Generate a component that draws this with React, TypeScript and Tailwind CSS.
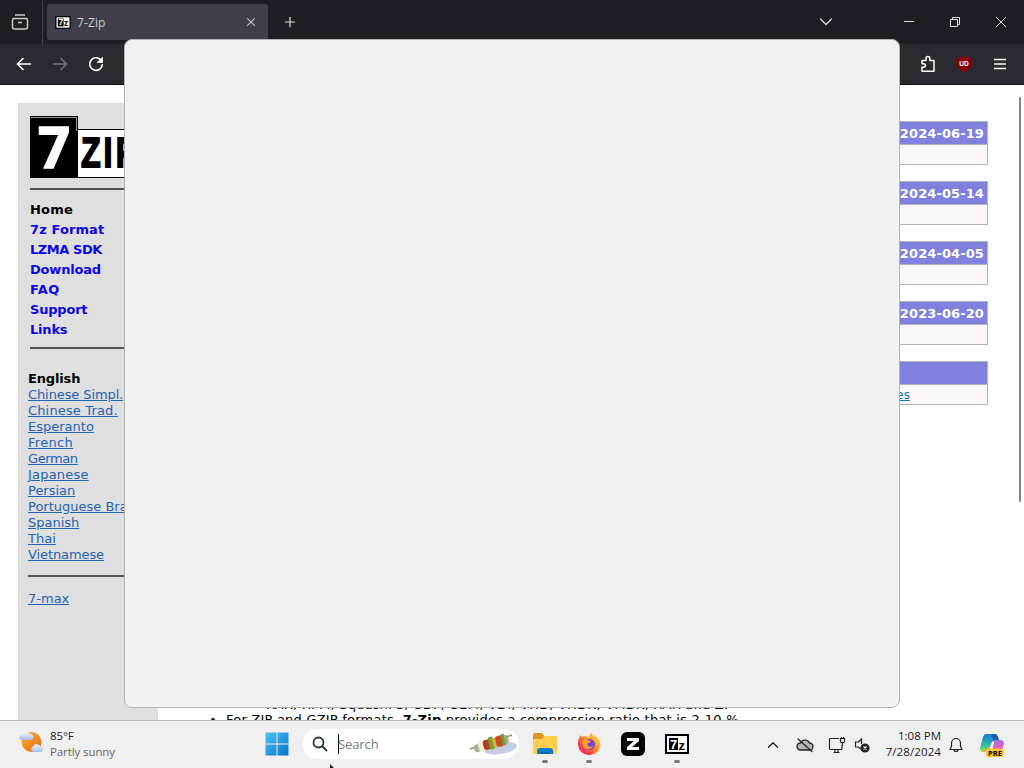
import React from 'react';
import { ChevronDown, ChevronUp, Plus, X } from 'lucide-react';

interface NewsItem {
    date: string;
    link?: string;
}

interface LinkItem {
    label: string;
    spacing: string;
}

const menuLinks: LinkItem[] = [
    { label: '7z Format', spacing: 'tracking-[0.1px]' },
    { label: 'LZMA SDK', spacing: 'tracking-[-0.45px]' },
    { label: 'Download', spacing: 'tracking-[-0.2px]' },
    { label: 'FAQ', spacing: 'tracking-[0.4px]' },
    { label: 'Support', spacing: 'tracking-[-0.2px]' },
    { label: 'Links', spacing: 'tracking-[-0.2px]' },
];

const languages: LinkItem[] = [
    { label: 'Chinese Simpl.', spacing: 'tracking-[-0.1px]' },
    { label: 'Chinese Trad.', spacing: 'tracking-[0.15px]' },
    { label: 'Esperanto', spacing: 'tracking-normal' },
    { label: 'French', spacing: 'tracking-[0.3px]' },
    { label: 'German', spacing: 'tracking-[-0.4px]' },
    { label: 'Japanese', spacing: 'tracking-[0.2px]' },
    { label: 'Persian', spacing: 'tracking-normal' },
    { label: 'Portuguese Brazil', spacing: 'tracking-normal' },
    { label: 'Spanish', spacing: 'tracking-normal' },
    { label: 'Thai', spacing: 'tracking-normal' },
    { label: 'Vietnamese', spacing: 'tracking-[-0.1px]' },
];

const news: NewsItem[] = [
    { date: '2024-06-19' },
    { date: '2024-05-14' },
    { date: '2024-04-05' },
    { date: '2023-06-20' },
    { date: '', link: 'es' },
];

// ---------------Browser---------------//
const SevenZipIcon: React.FC<{ className: string }> = ({ className }) => (
    <svg viewBox="0 0 24 20" className={className} fontFamily="Liberation Sans, sans-serif" fontWeight="700">
        <rect x="1" y="1" width="22" height="18" fill="#fff" stroke="#000" strokeWidth="2" />
        <rect x="4" y="4" width="9" height="12" fill="#000" />
        <text x="5" y="14.5" fontSize="13" fill="#fff">7</text>
        <text x="13.5" y="15.5" fontSize="13" fill="#000">z</text>
    </svg>
);

const TabStrip: React.FC = () => (
    <div className="flex h-11 bg-[#1e1d23] text-[#dddde2]">
        <div className="flex w-[43px] items-center justify-center border-r border-[#45444d]">
            <svg viewBox="0 0 18 18" className="mr-0.5 size-[18px]" fill="none" stroke="#c9c9ce" strokeWidth="1.5">
                <path d="M4 2h10M3 5.500h12a1.500 1.500 0 0 1 1.500 1.500v7a2 2 0 0 1-2 2h-11a2 2 0 0 1-2-2V7A1.500 1.500 0 0 1 3 5.500zM7 9.500h4" />
            </svg>
        </div>
        <div className="mt-1 ml-1 flex h-9 w-[221px] items-center rounded-[3px] bg-[#403e49] pr-2.5 pl-2">
            <SevenZipIcon className="h-[13px] w-4" />
            <span className="ml-1.5 flex-1 pt-0.5 text-[12px] tracking-[0.1px] text-[#cfced4]">7-Zip</span>
            <X className="size-3.5" strokeWidth={1.8} />
        </div>
        <div className="flex w-11 items-center justify-center">
            <Plus className="size-4" strokeWidth={1.8} />
        </div>
        <div className="flex flex-1 items-center justify-end">
            <svg viewBox="0 0 14 10" className="mr-[70px] h-2.5 w-3.5" fill="none" stroke="#dddde2" strokeWidth="1.300" strokeLinecap="round">
                <path d="m1.500 2 5.500 5.500L12.500 2" />
            </svg>
            <svg viewBox="0 0 12 12" className="mr-[34px] size-3" stroke="currentColor"><path d="M1 5.500h10" /></svg>
            <svg viewBox="0 0 12 12" className="mr-[34px] size-3" fill="none" stroke="currentColor">
                <path d="M1.500 3.500h7v7h-7zM3.500 3.500v-2h7v7h-2" />
            </svg>
            <svg viewBox="0 0 12 12" className="mr-[17px] size-3" stroke="currentColor"><path d="m1 1 10 10M11 1 1 11" /></svg>
        </div>
    </div>
);

const Toolbar: React.FC = () => (
    <div className="flex h-[41px] items-center justify-between border-b border-[#111] bg-[#2b2a31] px-4">
        <div className="flex gap-5">
            <svg viewBox="0 0 16 16" className="size-4" fill="none" stroke="#fff" strokeWidth="1.600" strokeLinecap="round">
                <path d="M1.500 8h13M7 2.500 1.500 8 7 13.500" />
            </svg>
            <svg viewBox="0 0 16 16" className="size-4" fill="none" stroke="#77767e" strokeWidth="1.500" strokeLinecap="round">
                <path d="M1.500 8h13M9 2.500 14.500 8 9 13.500" />
            </svg>
            <svg viewBox="0 0 16 16" className="size-4" fill="none" stroke="#fff" strokeWidth="1.600" strokeLinecap="round">
                <path d="M14.300 8.500A6.300 6.300 0 1 1 12.500 3.600" />
                <path d="M14.500 1.500v5h-5z" fill="#fff" strokeWidth="0.800" />
            </svg>
        </div>
        <div className="flex items-center gap-5 pr-px">
            <svg viewBox="0 0 16 18" className="h-[18px] w-4" fill="none" stroke="#fff" strokeWidth="1.500" strokeLinejoin="round">
                <path d="M2 5.500h4V3.500a1.900 1.900 0 0 1 3.800 0v2h4.200v10.700H2v-4h1.700a1.700 1.700 0 0 0 0-3.400H2z" />
            </svg>
            <svg viewBox="0 0 16 16" className="size-4">
                <path d="M8 0 15.500 3v6Q13.500 14 8 16 2.500 14 .5 9V3z" fill="#8e0009" />
                <text x="8" y="10.200" fontSize="6.500" fontWeight="700" fill="#fff" textAnchor="middle" fontFamily="Liberation Sans, sans-serif">UD</text>
            </svg>
            <svg viewBox="0 0 14 14" className="ml-px size-3.5" stroke="#fff" strokeWidth="1.500">
                <path d="M1 2.500h12M1 7h12M1 11.500h12" />
            </svg>
        </div>
    </div>
);

// ---------------Web page---------------//
const Logo: React.FC = () => (
    <svg viewBox="0 0 128 64" className="ml-0.5 block h-16 w-32" fontWeight="700">
        <rect x="47.500" y="14.500" width="79" height="48" fill="#fff" stroke="#000" />
        <rect x="0" y="1" width="48" height="62" fill="#000" />
        <path d="M1 2.500h45.500V16" fill="none" stroke="#999" />
        <text x="8" y="53" fontSize="58" fill="#fff" stroke="#fff" strokeWidth="1.500" textLength="32" lengthAdjust="spacingAndGlyphs" fontFamily="Open Sans, sans-serif">7</text>
        <g transform="scale(.75 1)" fontSize="43" stroke="#000" strokeWidth="1.800" fontFamily="Liberation Sans, sans-serif">
            <text x="68" y="52">Z</text>
            <text x="98" y="52">I</text>
            <text x="114.500" y="52">P</text>
        </g>
    </svg>
);

const Sidebar: React.FC = () => (
    <aside className="mt-[18px] ml-[18px] w-[140px] shrink-0 overflow-hidden bg-[#dfdfdf] px-2.5 whitespace-nowrap">
        <div className="h-3" />
        <Logo />
        <hr className="mt-[9px] ml-0.5 border-t-2 border-[#555]" />
        <ul className="mt-2.5 ml-0.5 font-bold">
            <li className="h-5 leading-5 tracking-[0.2px]">Home</li>
            {menuLinks.map((item) => (
                <li key={item.label} className={`h-5 leading-5 text-[#0b08e4] ${item.spacing}`}>{item.label}</li>
            ))}
        </ul>
        <hr className="mt-[7px] ml-0.5 border-t-2 border-[#555]" />
        <p className="mt-[22px] leading-4 font-bold tracking-[-0.15px]">English</p>
        <ul className="text-[#2462b5]">
            {languages.map((item) => (
                <li key={item.label} className={`h-4 leading-4 underline ${item.spacing}`}>{item.label}</li>
            ))}
        </ul>
        <hr className="mt-3 border-t-2 border-[#555]" />
        <p className="mt-3.5 leading-4 text-[#2462b5] underline">7-max</p>
    </aside>
);

const WebPage: React.FC = () => (
    <div className="flex h-[635px] overflow-hidden bg-white font-['DejaVu_Sans',Verdana,sans-serif] text-[13px] text-black">
        <Sidebar />
        <div className="flex flex-1 flex-col justify-end whitespace-nowrap">
            <ul className="-mb-2 ml-[68px] list-disc tracking-[0.22px]">
                <li className="-mb-px list-none pl-10 leading-4">RAR, RPM, SquashFS, UDF, UEFI, VDI, VHD, VHDX, VMDK, XAR and Z.</li>
                <li className="leading-4">For ZIP and GZIP formats, <b>7-Zip</b> provides a compression ratio that is 2-10 %</li>
            </ul>
        </div>
        <div className="mt-9 flex w-[140px] flex-col gap-4">
            {news.map((item) => (
                <div key={item.date} className="h-11 border border-[#b5b2b9] bg-[#fbf7f9]">
                    <div className="h-[23px] border-b border-[#b5b2b9] bg-[#8080df] pr-[3px] text-right leading-[23px] font-bold tracking-[0.1px] text-white">
                        {item.date}
                    </div>
                    {item.link && <a className="block pr-[77px] text-right text-[12px] leading-5 text-[#1675b8] underline">{item.link}</a>}
                </div>
            ))}
        </div>
        <div className="mt-3 mr-[3px] ml-[31px] h-[405px] w-0.5 rounded bg-[#858585]" />
    </div>
);

// ---------------Taskbar---------------//
const WeatherIcon: React.FC = () => (
    <svg viewBox="0 0 24 24" className="size-6">
        <defs>
            <linearGradient id="sun" x1="0" x2="1" y2="1"><stop stopColor="#f9b233" /><stop offset="1" stopColor="#e66912" /></linearGradient>
            <linearGradient id="cloud" x2="0" y2="1"><stop stopColor="#f4f7ff" /><stop offset="1" stopColor="#a6b9e6" /></linearGradient>
        </defs>
        <circle cx="12.500" cy="12" r="10" fill="url(#sun)" />
        <path d="M3 10a3 3 0 0 1 .5-6A4.500 4.500 0 0 1 11 4a3 3 0 0 1 1 6z" fill="url(#cloud)" />
        <path d="M14 22a3 3 0 0 1 0-5.500 4 4 0 0 1 7.500.5 2.500 2.500 0 0 1 0 5z" fill="url(#cloud)" />
    </svg>
);

const WindowsIcon: React.FC = () => (
    <svg viewBox="0 0 24 24" className="size-6">
        <defs>
            <linearGradient id="win" x2="1" y2="1"><stop stopColor="#4cc3f1" /><stop offset="1" stopColor="#0874c9" /></linearGradient>
        </defs>
        <path d="M.5.500h11v11H.5zM12.500.500h11v11h-11zM.5 12.500h11v11H.5zM12.500 12.500h11v11h-11z" fill="url(#win)" />
    </svg>
);

const KebabIcon: React.FC = () => (
    <svg viewBox="0 0 48 26" className="h-[26px] w-12">
        <ellipse cx="31" cy="17" rx="17" ry="6" fill="#c4cbe2" transform="rotate(-8 31 17)" />
        <path d="M1 18 43 4" stroke="#8b8b91" strokeWidth="1.500" />
        <g transform="rotate(-14 25 12)">
            <rect x="4" y="9" width="8" height="8" rx="4" fill="#a7b394" />
            <rect x="9" y="6" width="7" height="12" rx="3" fill="#edf0d7" />
            <rect x="14" y="7" width="8" height="10" rx="3" fill="#b83b27" />
            <rect x="20" y="5" width="5" height="13" rx="2" fill="#73a52d" />
            <rect x="24" y="7" width="6" height="10" rx="2" fill="#e1ad45" />
            <rect x="27" y="6" width="8" height="11" rx="3" fill="#c84c27" />
            <rect x="33" y="5" width="4" height="12" rx="2" fill="#69a23b" />
            <rect x="36" y="7" width="4" height="8" rx="2" fill="#b3a272" />
        </g>
    </svg>
);

const FolderIcon: React.FC = () => (
    <svg viewBox="0 0 26 24" className="h-6 w-[26px]">
        <path d="M1 3q0-2 2-2h7l2 3h11q2 0 2 2v9H1z" fill="#dc941d" />
        <path d="M1 7h9l2-3h11q2 0 2 2v14q0 2-2 2H3q-2 0-2-2z" fill="#ffce50" />
        <path d="M5 22v-3q0-3 3-3h10q3 0 3 3v3z" fill="#087fc8" />
        <path d="M9 20h8v2H9z" fill="#065fa5" />
    </svg>
);

const FirefoxIcon: React.FC = () => (
    <svg viewBox="0 0 24 24" className="size-6">
        <defs>
            <linearGradient id="fox" x1="1" x2="0" y2="1"><stop stopColor="#fff04c" /><stop offset=".4" stopColor="#ff9523" /><stop offset=".75" stopColor="#fb3750" /><stop offset="1" stopColor="#e31587" /></linearGradient>
        </defs>
        <path d="M1 13C.6 8.500 2 5.500 4 3l.8 2.500Q6.500 4 8.500 4.300 11 4.500 12 6q0-3.500 2.500-5.500Q15 3 18 5l1-1q4.500 4 4.300 9A11.200 11.200 0 0 1 1 13z" fill="url(#fox)" />
        <circle cx="12.500" cy="12.500" r="5.500" fill="#7144d4" />
        <path d="M5 9q3-3 5.500-1l3 1q-.5 2-3 2.500c-1 3 3 4.500 6 2-1 4-8 5.500-10.500 1Q5 12 5 9z" fill="#ff9d2a" />
    </svg>
);

const AppButton: React.FC<{ running?: boolean; children: React.ReactNode }> = ({ running, children }) => (
    <div className="flex w-11 flex-col items-center pt-[11px]">
        <div className="flex h-6 items-center">{children}</div>
        {running && <div className="mt-1 h-[3px] w-1.5 rounded bg-[#7b7b7b]" />}
    </div>
);

const CopilotIcon: React.FC = () => (
    <svg viewBox="0 0 24 24" className="size-6">
        <defs>
            <linearGradient id="copA" x2="0" y2="1"><stop stopColor="#167bd3" /><stop offset=".6" stopColor="#31bda5" /><stop offset="1" stopColor="#b6d437" /></linearGradient>
            <linearGradient id="copB" x2="0" y2="1"><stop stopColor="#a870ed" /><stop offset=".6" stopColor="#e660aa" /><stop offset="1" stopColor="#f99657" /></linearGradient>
        </defs>
        <path d="M6 1h9q2 0 3 3l1 4h-5q-2 0-3 3l-2 6q-1 2-3 2H4q-4 0-4-4L3 4q1-3 3-3z" fill="url(#copA)" />
        <path d="M13 1h2q2 0 3 3l1 4h-4q-2 0-2-2l-2-3z" fill="#2456ad" />
        <path d="M15 7h5q4 0 4 4l-3 9q-1 2-3 2H9q2 0 3-4l2-8q0-3 1-3z" fill="url(#copB)" />
        <rect x="6" y="15.500" width="18" height="8.500" rx="2" fill="#ffc52c" />
        <text x="15" y="22.500" fontSize="7.500" fontWeight="700" textAnchor="middle" textLength="14" fontFamily="Open Sans, sans-serif">PRE</text>
    </svg>
);

const Tray: React.FC = () => (
    <div className="flex h-full items-center text-[#222]">
        <ChevronUp className="mr-3.5 size-[18px]" strokeWidth={1.8} />
        <svg viewBox="0 0 18 16" className="mr-3.5 h-4 w-[18px]" stroke="#222" strokeWidth="1.300" strokeLinecap="round">
            <path d="M4.500 13a3.500 3.500 0 0 1 0-7 5 5 0 0 1 9 0 3.500 3.500 0 0 1 0 7z" fill="#b5b5b5" />
            <path d="m2 2 14 12.500" />
        </svg>
        <svg viewBox="0 0 18 18" className="mr-2 size-[18px]" fill="none" stroke="#222" strokeWidth="1.200">
            <path d="M11 2.500H2.500q-1 0-1 1v9q0 1 1 1h10.500q1 0 1-1V9M5.500 16.500h6M7 13.500v3M10 13.500v3M12.500 2.500v3q0 1.200 2 1.200t2-1.200v-3zM14.500 6.500v3M13.500 1v1.500M15.500 1v1.500" />
        </svg>
        <svg viewBox="0 0 16 16" className="mr-[13px] size-4" fill="none" stroke="#222" strokeWidth="1.200">
            <path d="M7.500 7V2L4.500 5H1.500v5h3l2 2" />
            <circle cx="11" cy="11" r="4" fill="#222" />
            <path d="m9.500 9.500 3 3m0-3-3 3" stroke="#fff" />
        </svg>
        <div className="-mt-0.5 w-[58px] text-right text-[11.5px] leading-4 whitespace-nowrap">
            <div>1:08 PM</div>
            <div className="-ml-2 tracking-[0.1px]">7/28/2024</div>
        </div>
        <svg viewBox="0 0 14 16" className="ml-2 h-4 w-3.5" fill="none" stroke="#222" strokeWidth="1.200" strokeLinejoin="round">
            <path d="M2.500 6a4.500 4.500 0 0 1 9 0v3.500l1.500 3H1l1.500-3zM5 12.500q0 2 2 2t2-2" />
        </svg>
        <div className="mr-5 ml-[17px]"><CopilotIcon /></div>
    </div>
);

const Taskbar: React.FC = () => (
    <div className="flex h-12 border-t border-[#bcbcbe] bg-[#f0f0f0] font-['Open_Sans',sans-serif]">
        <div className="flex w-[265px] pt-[9px] pl-[19px]">
            <WeatherIcon />
            <div className="-mt-0.5 ml-[7px] text-[11.5px] leading-4 tracking-[-0.1px]">
                <div className="text-[#222]">85°F</div>
                <div className="text-[#676767]">Partly sunny</div>
            </div>
        </div>
        <div className="pt-[11px]"><WindowsIcon /></div>
        <div className="mt-2 ml-3.5 flex h-[30px] w-[216px] items-center rounded-full bg-white pl-[9px]">
            <svg viewBox="0 0 16 16" className="size-4" fill="none" stroke="#24383d" strokeWidth="1.800" strokeLinecap="round">
                <circle cx="6.500" cy="6.500" r="5" /><path d="m10.200 10.200 4.300 4.300" />
            </svg>
            <div className="ml-2.5 h-5 w-px bg-black" />
            <span className="-ml-px flex-1 pt-px text-[13px] tracking-[-0.1px] text-[#7a7a7a]">Search</span>
            <div className="mr-0.5"><KebabIcon /></div>
        </div>
        <div className="ml-1 flex">
            <AppButton running><FolderIcon /></AppButton>
            <AppButton running><FirefoxIcon /></AppButton>
            <AppButton>
                <svg viewBox="0 0 24 24" className="size-6">
                    <rect width="24" height="24" rx="6" fill="#050505" />
                    <path d="M6 6h12v3l-7 6h7v3H6v-3l7-6H6z" fill="#fff" />
                </svg>
            </AppButton>
            <AppButton running><SevenZipIcon className="h-5 w-6" /></AppButton>
        </div>
        <div className="flex flex-1 justify-end"><Tray /></div>
    </div>
);

const App: React.FC = () => {
    return (
        <div className="relative h-[768px] w-[1024px] overflow-hidden bg-white font-['Open_Sans',sans-serif]">
            <TabStrip />
            <Toolbar />
            <WebPage />
            <Taskbar />
            {/* Window that is still loading */}
            <div className="absolute top-[39px] left-[124px] h-[669px] w-[776px] rounded-lg border border-[#b4b4b6] bg-[#f2f2f2]" />
            {/* Mouse pointer */}
            <svg viewBox="0 0 6 5" className="absolute top-[764px] left-[330px] h-[5px] w-1.5"><path d="M0 0v5h5z" fill="#222" /></svg>
        </div>
    );
};

export default App;
